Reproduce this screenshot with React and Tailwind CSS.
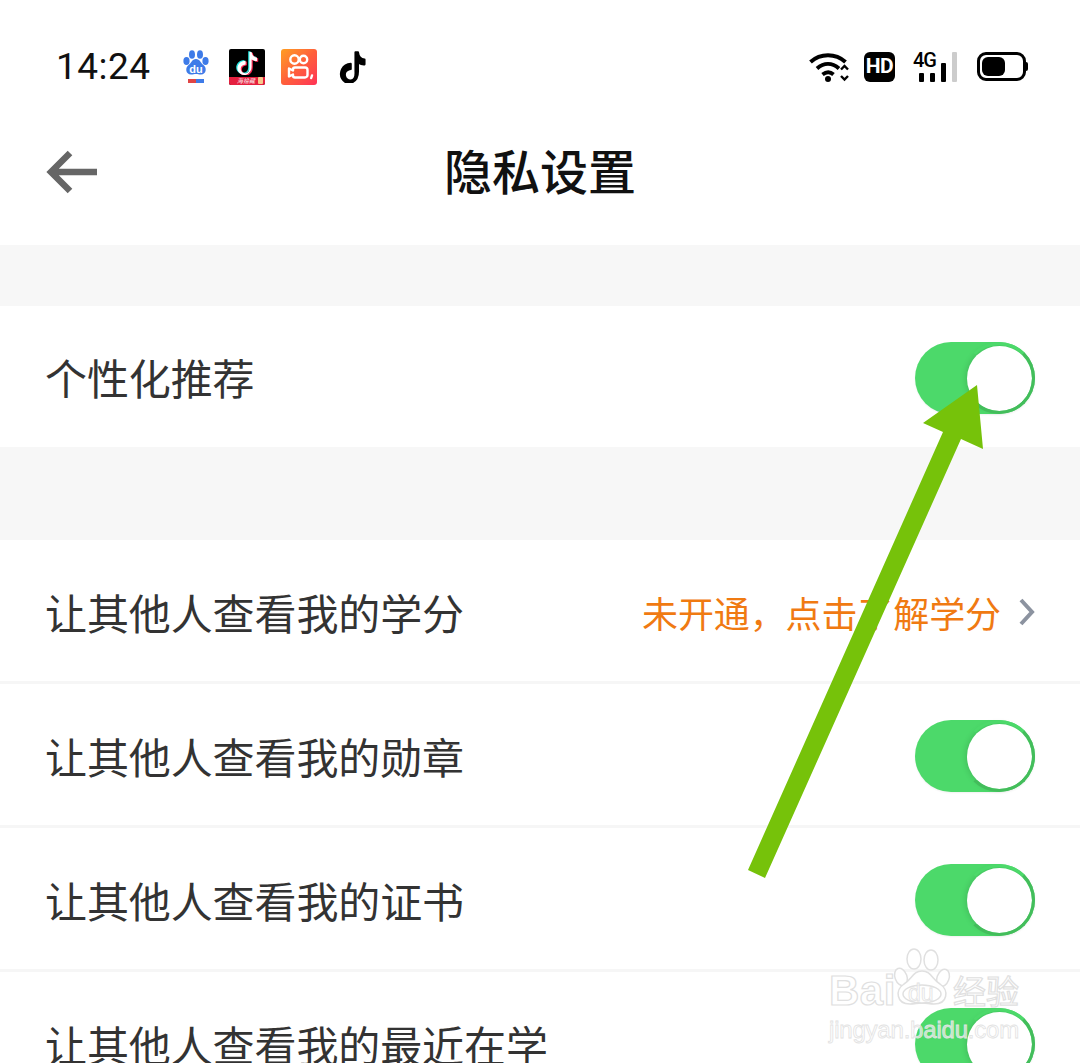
import React from "react";

const TIKTOK = "M16.6 1c.4 3.2 2.2 5.2 5.4 5.4v3.6c-1.9.2-3.5-.4-5.400-1.500v6.900c0 8.700-9.500 11.400-13.300 5.200C.9 16.600 3.300 10 10.600 9.700v3.800c-.6.100-1.200.2-1.700.4-2.200.7-3.500 2.100-3.100 4.600.7 4.700 9.300 6.100 8.600-3.100V1h2.200z";
const CN = "font-['Noto_Sans_CJK_SC','Noto_Sans',sans-serif]";

function Toggle() {
  return (
    <div className="relative w-[120px] h-[72px] rounded-full bg-[#4cd96a] shadow-[0_1px_2px_rgba(0,0,0,0.06)]">
      <div className="absolute right-[3px] top-[4px] w-[65px] h-[65px] rounded-full bg-white shadow-[-1px_0_6px_rgba(0,0,0,0.14)]" />
      <div className="absolute right-0 top-0 w-[72px] h-[72px] rounded-full border-[3px] border-[#43bd5b] border-l-transparent border-t-[#4cd96a]" />
    </div>
  );
}

function Row({ label, children, height = "h-[144px]", line = true }) {
  return (
    <div className={`${height} flex items-center justify-between pl-[45px] pr-[45px] bg-white shrink-0 ${line ? "pt-[2px] border-b-[3px] border-[#f6f6f6]" : ""}`}>
      <span className="text-[42px] leading-[56px] text-[#333333] tracking-[-0.1px]">{label}</span>
      {children}
    </div>
  );
}

function Baidu() {
  return (
    <svg width="26" height="34" viewBox="0 0 26 34" className="block">
      <g fill="#3E7BE8">
        <ellipse cx="3.500" cy="11" rx="3.100" ry="4" />
        <ellipse cx="9" cy="4.500" rx="3" ry="4.300" />
        <ellipse cx="17" cy="4.500" rx="3" ry="4.300" />
        <ellipse cx="22.500" cy="11" rx="3.100" ry="4" />
        <path d="M13 9c4 0 4.500 4 7.500 6 3.500 2.500 3 9.500-2.500 9.500-2 0-3.300-.5-5-.5s-3 .5-5 .5C2.500 24.500 2 17.500 5.500 15c3-2 3.500-6 7.500-6z" />
      </g>
      <text x="13" y="23" textAnchor="middle" fontSize="11" fontWeight="700" fill="#fff" fontFamily="Liberation Sans, sans-serif">du</text>
      <rect x="5" y="29" width="8" height="4" fill="#E04545" />
      <rect x="13" y="29" width="8" height="4" fill="#3E7BE8" />
    </svg>
  );
}

function TiktokRed() {
  return (
    <div className="relative w-[36px] h-[36px] bg-black rounded-[2px] overflow-hidden">
      <svg width="24" height="24" viewBox="0 0 24 24" className="absolute left-[6px] top-[2px]">
        <path d={TIKTOK} fill="#25E5E0" transform="translate(-1.200 -0.800)" />
        <path d={TIKTOK} fill="#FE2C55" transform="translate(1.200 0.800)" />
        <path d={TIKTOK} fill="#fff" />
      </svg>
      <div className="absolute left-0 right-0 bottom-0 h-[8px] bg-[#e5203f] flex items-center pl-[8px]">
        <span className={`text-[6px] leading-none text-white italic ${CN}`}>海拾藏</span>
      </div>
      <div className="absolute right-[2px] bottom-[1px] w-[5px] h-[7px] rounded-[1px] bg-[#f6c98c]" />
    </div>
  );
}

function Kuaishou() {
  return (
    <div className="w-[36px] h-[36px] rounded-[3px] bg-gradient-to-br from-[#FF9D1E] via-[#FF5F3A] to-[#FF2F55]">
      <svg width="36" height="36" viewBox="0 0 36 36" fill="none" stroke="#fff" strokeWidth="2.400">
        <circle cx="13.500" cy="10.500" r="4.200" />
        <circle cx="22.500" cy="10.500" r="3.700" />
        <path d="M8 19.500l4 2v-1a2 2 0 0 1 2-2h10a2.500 2.500 0 0 1 2.500 2.500v5a2.500 2.500 0 0 1-2.500 2.500H14a2 2 0 0 1-2-2v-1l-4 2z" strokeLinejoin="round" />
        <path d="M31 26.500l-.8 2.500" strokeLinecap="round" />
      </svg>
    </div>
  );
}

function TiktokBlack() {
  return (
    <svg width="29" height="32" viewBox="0 0 24 24" preserveAspectRatio="none" className="block">
      <path d={TIKTOK} fill="#000" stroke="#000" strokeWidth="1.600" strokeLinejoin="round" />
    </svg>
  );
}

function Wifi() {
  return (
    <svg width="41" height="30" viewBox="0 0 41 30" fill="none" className="block">
      <path d="M1.500 10C11.500 1 26.500 1 36.500 10" stroke="#000" strokeWidth="4" />
      <path d="M8 16.500c7-6 15-6 22 0" stroke="#000" strokeWidth="4" />
      <path d="M13.500 22.500c4-3 7.500-3 11 0" stroke="#000" strokeWidth="4" />
      <circle cx="19" cy="27" r="3" fill="#000" />
      <path d="M32 17.500l3.500-3.500 3.500 3.500M32 24l3.500 3.500L39 24" stroke="#000" strokeWidth="2.400" />
    </svg>
  );
}

function Signal() {
  return (
    <div className="relative w-[44px] h-[30px]">
      <span className="absolute left-0 top-[-2px] text-[20px] leading-[20px] font-medium tracking-[-1px] text-black font-['Roboto',sans-serif]">4G</span>
      <div className="absolute left-[6px] bottom-0 w-[5px] h-[9px] rounded-[1px] bg-black" />
      <div className="absolute left-[17px] bottom-0 w-[5px] h-[9px] rounded-[1px] bg-black" />
      <div className="absolute left-[28px] bottom-0 w-[5px] h-[19px] rounded-[1px] bg-black" />
      <div className="absolute left-[39px] bottom-0 w-[5px] h-[30px] rounded-[1px] bg-[#cccccc]" />
    </div>
  );
}

function Battery() {
  return (
    <div className="flex items-center">
      <div className="w-[49px] h-[29px] rounded-[9px] border-[3px] border-black p-[2px]">
        <div className="w-[23px] h-full rounded-[6px] bg-black" />
      </div>
      <div className="w-[2px] h-[9px] bg-black rounded-r-[2px]" />
    </div>
  );
}

function Overlay() {
  return (
    <svg width="1080" height="1063" viewBox="0 0 1080 1063" className="absolute inset-0 pointer-events-none">
      <polygon points="977,385 983,449 961,439 765,878 748,870 943,432 923,423" fill="#76C20A" />
    </svg>
  );
}

function Watermark() {
  const latin = "text-white [-webkit-text-stroke:1.200px_#e0e0e0] font-['Liberation_Sans',sans-serif] font-bold";
  const thin = "text-white/60 [-webkit-text-stroke:0.800px_#e2e2e2] font-['Liberation_Sans',sans-serif] font-normal";
  const cjk = "text-white [-webkit-text-stroke:1.200px_#e0e0e0]";
  return (
    <div className="absolute left-[826px] top-[946px] w-[200px] h-[100px] pointer-events-none">
      <span className={`absolute left-[3px] top-[23px] text-[42px] leading-[44px] tracking-[0.500px] ${latin}`}>Bai</span>
      <svg width="58" height="64" viewBox="0 0 58 64" className="absolute left-[67px] top-[1px]" fill="#fff" stroke="#e0e0e0" strokeWidth="1.500">
        <ellipse cx="8" cy="30" rx="6" ry="9" transform="rotate(-20 8 30)" />
        <ellipse cx="21" cy="12" rx="7" ry="10" />
        <ellipse cx="38" cy="13" rx="7" ry="10" />
        <ellipse cx="50" cy="31" rx="6" ry="9" transform="rotate(20 50 31)" />
        <path d="M29 24c9 0 10 8 18 13 9 6 8 20-6 20-4 0-8-1-12-1s-8 1-12 1C3 57 2 43 11 37c8-5 9-13 18-13z" />
        <ellipse cx="29" cy="47" rx="19" ry="9" />
      </svg>
      <span className={`absolute left-[82px] top-[34px] text-[23px] leading-[26px] ${thin}`}>du</span>
      <span className={`absolute left-[127px] top-[24px] text-[33px] leading-[40px] ${cjk} ${CN}`}>经验</span>
      <span className={`absolute left-[3px] top-[70px] text-[24px] leading-[28px] tracking-[-0.200px] ${thin}`}>jingyan.baidu.com</span>
    </div>
  );
}

export default function App() {
  return (
    <div className={`relative w-[1080px] h-[1063px] overflow-hidden bg-white flex flex-col ${CN}`}>
      <div className="h-[100px] pt-[33px] shrink-0 flex items-center justify-between">
        <div className="flex items-center">
          <span className="ml-[56px] w-[95px] text-[37px] leading-[44px] tracking-[0.500px] text-[#111] font-['Roboto',sans-serif] font-normal">14:24</span>
          <div className="ml-[32px]"><Baidu /></div>
          <div className="ml-[20px]"><TiktokRed /></div>
          <div className="ml-[16px]"><Kuaishou /></div>
          <div className="ml-[21px]"><TiktokBlack /></div>
        </div>
        <div className="flex items-center mr-[52px]">
          <Wifi />
          <div className="ml-[14px] w-[31px] h-[30px] rounded-[6px] bg-black flex items-center justify-center text-white text-[21px] font-bold tracking-[-0.5px] font-['Roboto',sans-serif]">HD</div>
          <div className="ml-[18px]"><Signal /></div>
          <div className="ml-[20px]"><Battery /></div>
        </div>
      </div>

      <div className="relative h-[145px] pb-[7px] shrink-0 flex items-center justify-center">
        <svg width="52" height="46" viewBox="0 0 52 46" fill="none" stroke="#666666" strokeWidth="6.500" className="absolute left-[46px] top-[49px]">
          <path d="M24 4L5 23l19 19M5 23h46" />
        </svg>
        <span className="text-[48px] leading-[60px] font-medium text-[#111]">隐私设置</span>
      </div>

      <div className="h-[61px] bg-[#f7f7f7] shrink-0" />
      <Row label="个性化推荐" height="h-[141px]" line={false}><div className="mt-[2px]"><Toggle /></div></Row>
      <div className="h-[93px] bg-[#f7f7f7] shrink-0" />
      <Row label="让其他人查看我的学分">
        <div className="flex items-center">
          <span className="text-[36px] leading-[48px] text-[#F07A12] tracking-[-0.1px]">未开通，点击了解学分</span>
          <svg width="16" height="28" viewBox="0 0 16 28" fill="none" stroke="#8C93A0" strokeWidth="4" className="ml-[18px]">
            <path d="M2 2l11 12L2 26" />
          </svg>
        </div>
      </Row>
      <Row label="让其他人查看我的勋章"><Toggle /></Row>
      <Row label="让其他人查看我的证书"><Toggle /></Row>
      <Row label="让其他人查看我的最近在学" line={false}><Toggle /></Row>

      <Overlay />
      <Watermark />
    </div>
  );
}
